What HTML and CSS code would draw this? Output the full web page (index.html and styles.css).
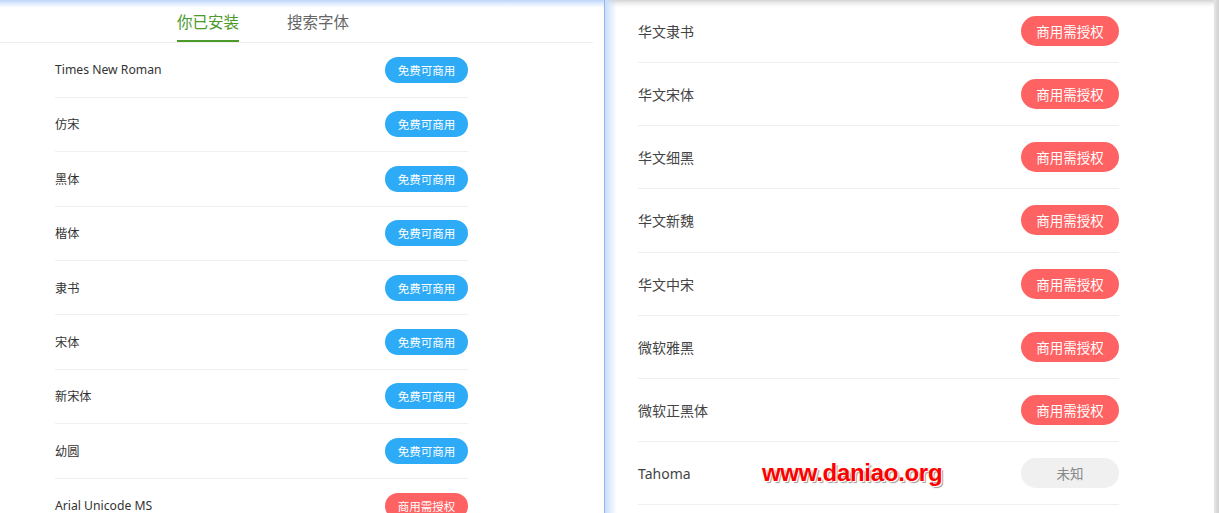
FILE: index.html
```html
<!DOCTYPE html>
<html lang="zh-CN">
<head>
<meta charset="utf-8">
<title>字体</title>
<link rel="stylesheet" href="styles.css">
</head>
<body>
<div class="page">
  <section class="panel left">
    <div class="tabs">
      <span class="tab active">你已安装</span>
      <span class="tab">搜索字体</span>
    </div>
    <ul class="list small">
      <li class="row"><span class="name">Times New Roman</span><span class="badge free">免费可商用</span></li>
      <li class="row"><span class="name">仿宋</span><span class="badge free">免费可商用</span></li>
      <li class="row"><span class="name">黑体</span><span class="badge free">免费可商用</span></li>
      <li class="row"><span class="name">楷体</span><span class="badge free">免费可商用</span></li>
      <li class="row"><span class="name">隶书</span><span class="badge free">免费可商用</span></li>
      <li class="row"><span class="name">宋体</span><span class="badge free">免费可商用</span></li>
      <li class="row"><span class="name">新宋体</span><span class="badge free">免费可商用</span></li>
      <li class="row"><span class="name">幼圆</span><span class="badge free">免费可商用</span></li>
      <li class="row"><span class="name">Arial Unicode MS</span><span class="badge paid">商用需授权</span></li>
    </ul>
  </section>
  <section class="panel right">
    <ul class="list big">
      <li class="row"><span class="name">华文隶书</span><span class="badge paid">商用需授权</span></li>
      <li class="row"><span class="name">华文宋体</span><span class="badge paid">商用需授权</span></li>
      <li class="row"><span class="name">华文细黑</span><span class="badge paid">商用需授权</span></li>
      <li class="row"><span class="name">华文新魏</span><span class="badge paid">商用需授权</span></li>
      <li class="row"><span class="name">华文中宋</span><span class="badge paid">商用需授权</span></li>
      <li class="row"><span class="name">微软雅黑</span><span class="badge paid">商用需授权</span></li>
      <li class="row"><span class="name">微软正黑体</span><span class="badge paid">商用需授权</span></li>
      <li class="row"><span class="name">Tahoma</span><span class="badge unknown">未知</span></li>
    </ul>
    <div class="watermark">www.daniao.org</div>
  </section>
</div>
</body>
</html>
```

FILE: styles.css
```css
* { box-sizing: border-box; }
html, body { margin: 0; padding: 0; }
body {
  width: 1219px;
  height: 513px;
  overflow: hidden;
  background: #fff;
  font-family: "Noto Sans", "Noto Sans CJK SC", sans-serif;
  color: #333;
}
.page {
  display: flex;
  height: 513px;
}
.panel {
  position: relative;
  height: 513px;
  overflow: hidden;
}
.left {
  width: 605px;
  flex: none;
  border-right: 1px solid #8fb6ee;
  background: linear-gradient(to bottom, #bcd5fa 0, #e4eefd 4px, #fff 8px);
}
.right {
  flex: 1;
  background:
    linear-gradient(to right, rgba(255,255,255,0) 0, rgba(255,255,255,0) 609px, #e6e6e6 609px, #cfcfcf 614px),
    linear-gradient(to right, #c9ddfa 0, rgba(255,255,255,0) 12px),
    linear-gradient(to bottom, #d4d4d4 0, #ececec 3px, #fff 7px);
}
.tabs {
  display: flex;
  justify-content: flex-start;
  gap: 48px;
  height: 43px;
  margin-right: 11px;
  padding-left: 177px;
  border-bottom: 1px solid #eeeeee;
}
.tab {
  font-family: "Noto Sans CJK SC", sans-serif;
  font-size: 15.5px;
  line-height: 42px;
  color: #666;
}
.tab.active {
  color: #4a9a2c;
  border-bottom: 2px solid #4a9a2c;
}
.list {
  list-style: none;
  margin: 0;
  padding: 0;
}
.row {
  display: flex;
  align-items: center;
  justify-content: space-between;
  border-bottom: 1px solid #efefef;
}
.name {
  font-family: "Noto Sans", "Noto Sans CJK SC", sans-serif;
}
.badge {
  display: inline-flex;
  align-items: center;
  justify-content: center;
  border-radius: 999px;
  color: #fff;
  font-family: "Noto Sans CJK SC", sans-serif;
}
.badge.free { background: #2eabf7; }
.badge.paid { background: #ff6262; }
.badge.unknown { background: #f0f0f0; color: #888; }

.small {
  width: 413px;
  margin-left: 55px;
}
.small .row { height: 54.4px; }
.small .row:first-child { height: 54.8px; }
.small .row:last-child { border-bottom: none; }
.small .name { font-size: 12.2px; color: #333; }
.small .badge {
  width: 83px;
  height: 26px;
  font-size: 11.5px;
}

.big {
  width: 481px;
  margin-left: 33px;
}
.big .row { height: 63.15px; }
.big .name { font-size: 14px; color: #444; }
.big .badge {
  width: 98px;
  height: 30px;
  font-size: 13.5px;
}
.watermark {
  position: absolute;
  left: 157px;
  top: 459px;
  font-family: "Liberation Sans", Arial, sans-serif;
  font-weight: bold;
  font-size: 24px;
  letter-spacing: -0.3px;
  color: #ff0000;
  text-shadow: 1px 1px 0 #fff, 2px 2px 1px #9a9a9a;
}
```
